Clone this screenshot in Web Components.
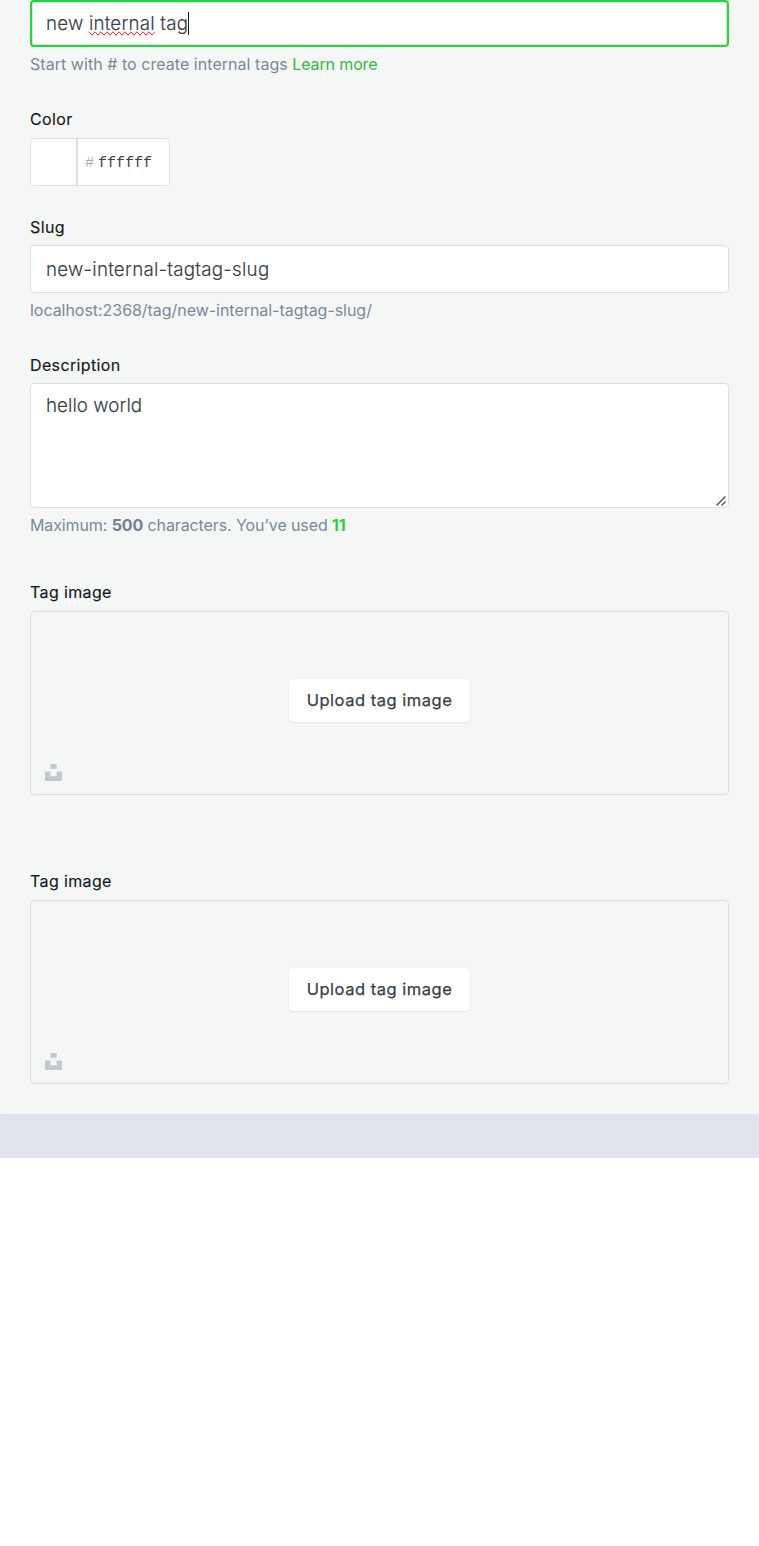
<!DOCTYPE html>
<html lang="en">
<head>
<meta charset="utf-8">
<title>Tag settings</title>
<style>
body{margin:0;background:#fff;font-family:Inter,"Liberation Sans",sans-serif;color:#394047}
</style>
</head>
<body>
<tag-form>
  <form-field style="--label-gap:0px">
    <text-box focused>new <spell-mark>internal</spell-mark> tag</text-box>
    <field-hint slot="hint" style="letter-spacing:.045px">Start with # to create internal tags <hint-link>Learn more</hint-link></field-hint>
  </form-field>
  <form-field label="Color" style="--label-gap:9px;margin-top:35px"><color-box value="ffffff"></color-box></form-field>
  <form-field label="Slug" style="margin-top:31px">
    <text-box>new-internal-tagtag-slug</text-box>
    <field-hint slot="hint" style="letter-spacing:-.04px">localhost:2368/tag/new-internal-tagtag-slug/</field-hint>
  </form-field>
  <form-field label="Description" style="margin-top:35px">
    <text-box multiline>hello world</text-box>
    <field-hint slot="hint" style="letter-spacing:-.11px">Maximum: <b>500</b> characters. You’ve used <b class="count">11</b></field-hint>
  </form-field>
  <form-field label="Tag image" style="--label-gap:9px;margin-top:47px"><image-uploader>Upload tag image</image-uploader></form-field>
  <form-field label="Tag image" style="--label-gap:9px;margin-top:76px"><image-uploader>Upload tag image</image-uploader></form-field>
</tag-form>
<footer-band></footer-band>
<script>
const define = (name, html, setup) => {
  const template = document.createElement('template');
  template.innerHTML = html;
  customElements.define(name, class extends HTMLElement {
    constructor() {
      super();
      this.attachShadow({mode: 'open'}).append(template.content.cloneNode(true));
      if (setup) setup(this, this.shadowRoot);
    }
  });
};
define('tag-form', `<style>
:host{display:block;box-sizing:border-box;height:1114px;padding:0 30px;background:#f4f7f6;border-bottom-left-radius:3px}
</style><slot></slot>`);
define('form-field', `<style>
:host{display:block}
.label{height:20px;margin-bottom:var(--label-gap,8px);font-size:16px;line-height:20px;font-weight:400;letter-spacing:.37px;-webkit-text-stroke:.15px currentColor;color:#15171a;white-space:nowrap}
.label:empty{display:none}
</style><div class="label"></div><slot></slot><slot name="hint"></slot>`, (host, root) => {
  root.querySelector('.label').textContent = host.getAttribute('label') || '';
});
define('text-box', `<style>
:host{display:flex;align-items:center;box-sizing:border-box;height:48px;padding:2px 15px 0;border:1px solid #dddfe1;border-radius:4px;background:#fff;font-size:18.75px;line-height:24px;font-weight:300;letter-spacing:.24px;-webkit-text-stroke:.15px currentColor;color:#394047}
:host([focused]){height:47px;border:2px solid #30cf43;padding:0 14px;letter-spacing:.2px;box-shadow:inset 0 0 0 1px #c9f3ce}
:host([multiline]){height:125px;align-items:flex-start;padding-top:10px;letter-spacing:.04px;position:relative}
.text{white-space:pre}
.caret,.grip{display:none}
:host([focused]) .caret{display:block;width:1px;height:23px;background:#15171a}
:host([multiline]) .grip{display:block;position:absolute;right:1px;bottom:0}
</style><span class="text"><slot></slot></span><i class="caret"></i>
<svg class="grip" width="12" height="12" viewBox="0 0 12 12" fill="none" stroke="#55585b" stroke-width="1.5"><path d="M1.5 10.5 10.5 1.5M6.5 10.5 10.5 6.5"/></svg>`);
define('spell-mark', `<style>
:host{display:inline;text-decoration-line:spelling-error;text-decoration-skip-ink:none}
</style><slot></slot>`);
define('field-hint', `<style>
:host{display:block;height:20px;margin-top:7px;font-size:16px;line-height:20px;font-weight:400;color:#7c8899;white-space:nowrap}
::slotted(b){font-weight:700;color:#738093}
::slotted(b.count){color:#30cf43}
</style><slot></slot>`);
define('hint-link', `<style>:host{color:#37b846;letter-spacing:-.14px}</style><slot></slot>`);
define('color-box', `<style>
:host{display:flex;box-sizing:border-box;width:140px;height:48px;border:1px solid #dddfe1;border-radius:4px;background:#fff}
.swatch{width:45px;border-right:2px solid #dddfe1}
.value{display:flex;align-items:center;padding:3px 0 0 7px;font:15px/20px "Liberation Mono",monospace;color:#394047}
.hash{width:13px;color:#a3afbb}
</style><div class="swatch"></div><div class="value"><span class="hash">#</span><span class="hex"></span></div>`, (host, root) => {
  root.querySelector('.hex').textContent = host.getAttribute('value');
});
define('image-uploader', `<style>
:host{display:grid;place-items:center;box-sizing:border-box;height:184px;border:1px solid #dddfe1;border-radius:4px;position:relative;padding-bottom:5px}
.button{display:flex;align-items:center;justify-content:center;box-sizing:border-box;width:181px;height:43px;padding-bottom:1px;border-radius:4px;background:#fff;box-shadow:0 0 1px rgba(0,0,0,.15),0 1px 2px rgba(0,0,0,.06);font-size:16.5px;font-weight:400;letter-spacing:.52px;-webkit-text-stroke:.25px currentColor;color:#394047;white-space:nowrap}
svg{position:absolute;left:14px;bottom:13px}
</style><div class="button"><slot></slot></div>
<svg width="17" height="17" viewBox="0 0 17 17" fill="#c5c8cd"><path d="M5.4 0h6.3v4.8H5.4zM0 7.4h5.4v4.8h6.3V7.4H17V17H0z"/></svg>`);
define('footer-band', `<style>:host{display:block;height:44px;background:#e1e4ed}</style>`);
</script>
</body>
</html>
